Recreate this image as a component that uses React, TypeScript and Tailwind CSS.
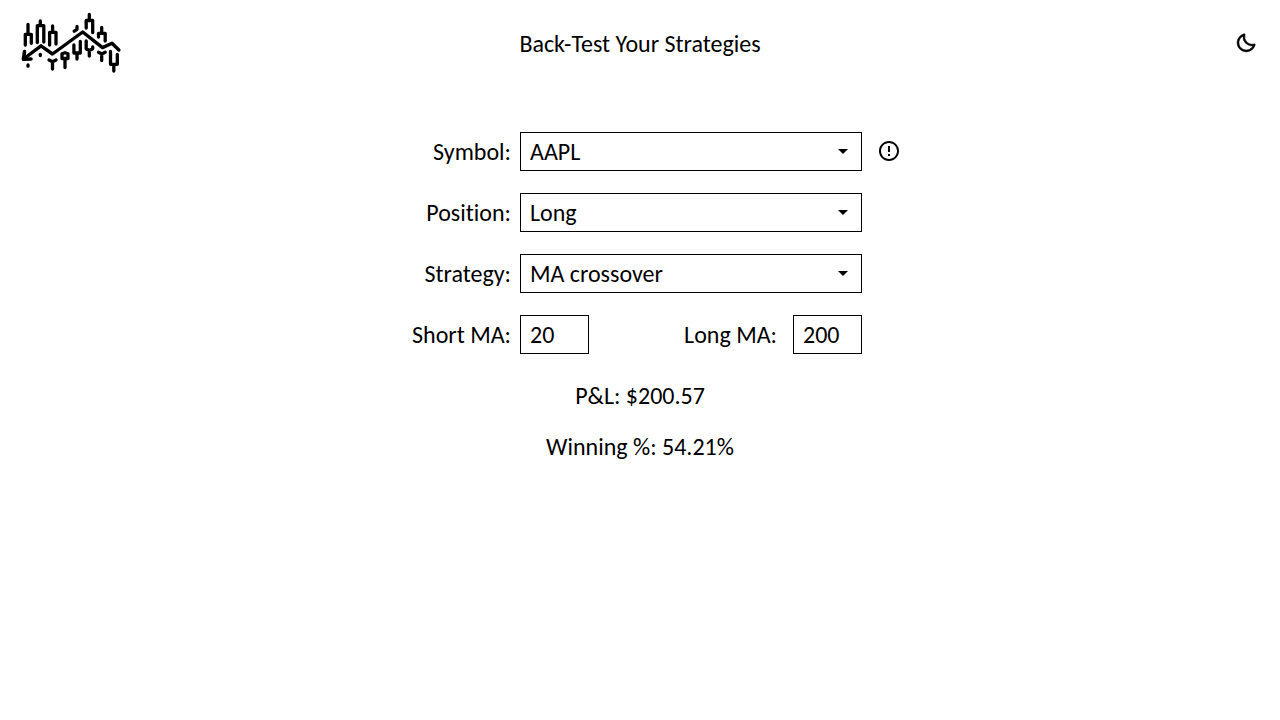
import { useId, useState } from "react";
import { BiMoon } from "react-icons/bi";
import { MdArrowDropDown, MdErrorOutline } from "react-icons/md";

function Logo() {
  return (
    <svg
      viewBox="20 11 102 64"
      className="h-16 w-[102px]"
      fill="none"
      stroke="#000"
      strokeWidth="3.3"
      strokeLinecap="round"
      strokeLinejoin="round"
      role="img"
      aria-label="Logo"
    >
      <path d="M23.5 59 41 45.8 52.5 54 82.7 32 102.5 47.6 112 43.3 118.9 50" strokeWidth="3.4" />
      <path d="M24.5 51.5 23.5 59.3 31 59" strokeWidth="3.6" />
      <path d="M28 24.5V34M25.3 45V34.3H31.3V43.3" />
      <path d="M40.3 21V25M37.3 42.5V25.7H43.8V42" />
      <path d="M52.6 26V32M49.6 45V32.3H56V44" />
      <path d="M28 65V66.2M40.3 54.3V55.5" />
      <path d="M49 60 52.5 61.7 56 60M52.5 62V69" />
      <path d="M62 53.8 65 52.8 68 53.8V58.5H62ZM65 59V67.5" />
      <path d="M74.2 31.2 77 29.3V26.5M73.9 45V53H80.3V41.5M77 53V59" />
      <path d="M89.3 14.5V20M86.2 28V20.5H92.7V32.5" />
      <path d="M86.2 41V48.7L89.3 50.5 92.7 48.7V47M89.3 51V56" />
      <path d="M101.7 27.5V33M98.5 37V33.3H105.2V41" />
      <path d="M98.5 52.3 101.7 54 105.2 52.3M101.7 54V60.5" />
      <path d="M110.5 51.5V64.3H117.3V54.5M113.8 64.5V71" />
    </svg>
  );
}

const labelClass = "w-[132px] shrink-0 text-right";

function SelectRow({ label, options, info }: { label: string; options: string[]; info?: boolean }) {
  const id = useId();
  return (
    <div className="flex items-center">
      <label htmlFor={id} className={labelClass}>
        {label}
      </label>
      <div className="relative ml-[9px] w-[342px]">
        <select
          id={id}
          className="block h-[39px] w-full appearance-none border border-black bg-white pr-8 pb-px pl-[9px] outline-none"
        >
          {options.map((option) => (
            <option key={option}>{option}</option>
          ))}
        </select>
        <MdArrowDropDown className="pointer-events-none absolute top-[7px] right-[7px] size-6" />
      </div>
      {info && (
        <button type="button" aria-label="About symbols" className="ml-[15px] pb-px">
          <MdErrorOutline className="size-6" />
        </button>
      )}
    </div>
  );
}

function PeriodInput({ id, initial }: { id: string; initial: string }) {
  const [value, setValue] = useState(initial);
  return (
    <input
      id={id}
      type="text"
      inputMode="numeric"
      value={value}
      onChange={(event) => setValue(event.target.value)}
      className="h-[39px] w-[69px] border border-black bg-white pb-px pl-[9px] outline-none"
    />
  );
}

export default function App() {
  return (
    <div className="min-h-screen bg-white font-['Carlito','Calibri','Lato',sans-serif] text-[24px] leading-[27px] text-black [font-variant-ligatures:none]">
      <header className="grid grid-cols-[1fr_auto_1fr] items-center px-5 pt-[11px]">
        <a href="#" className="justify-self-start">
          <Logo />
        </a>
        <h1>Back-Test Your Strategies</h1>
        <button type="button" aria-label="Dark mode" className="mr-[3px] justify-self-end">
          <BiMoon className="size-[22px]" stroke="#000" strokeWidth="0.6" />
        </button>
      </header>
      <main className="mt-[57px] flex flex-col items-center">
        <form className="flex w-[522px] flex-col gap-[22px]">
          <SelectRow label="Symbol:" options={["AAPL", "MSFT", "TSLA"]} info />
          <SelectRow label="Position:" options={["Long", "Short"]} />
          <SelectRow label="Strategy:" options={["MA crossover", "RSI"]} />
          <div className="flex items-center">
            <label htmlFor="short-ma" className={labelClass}>
              Short MA:
            </label>
            <div className="ml-[9px] flex w-[342px] items-center">
              <PeriodInput id="short-ma" initial="20" />
              <label htmlFor="long-ma" className="mr-4 ml-auto">
                Long MA:
              </label>
              <PeriodInput id="long-ma" initial="200" />
            </div>
          </div>
        </form>
        <p className="mt-7">P&amp;L: $200.57</p>
        <p className="mt-6">Winning %: 54.21%</p>
      </main>
    </div>
  );
}
